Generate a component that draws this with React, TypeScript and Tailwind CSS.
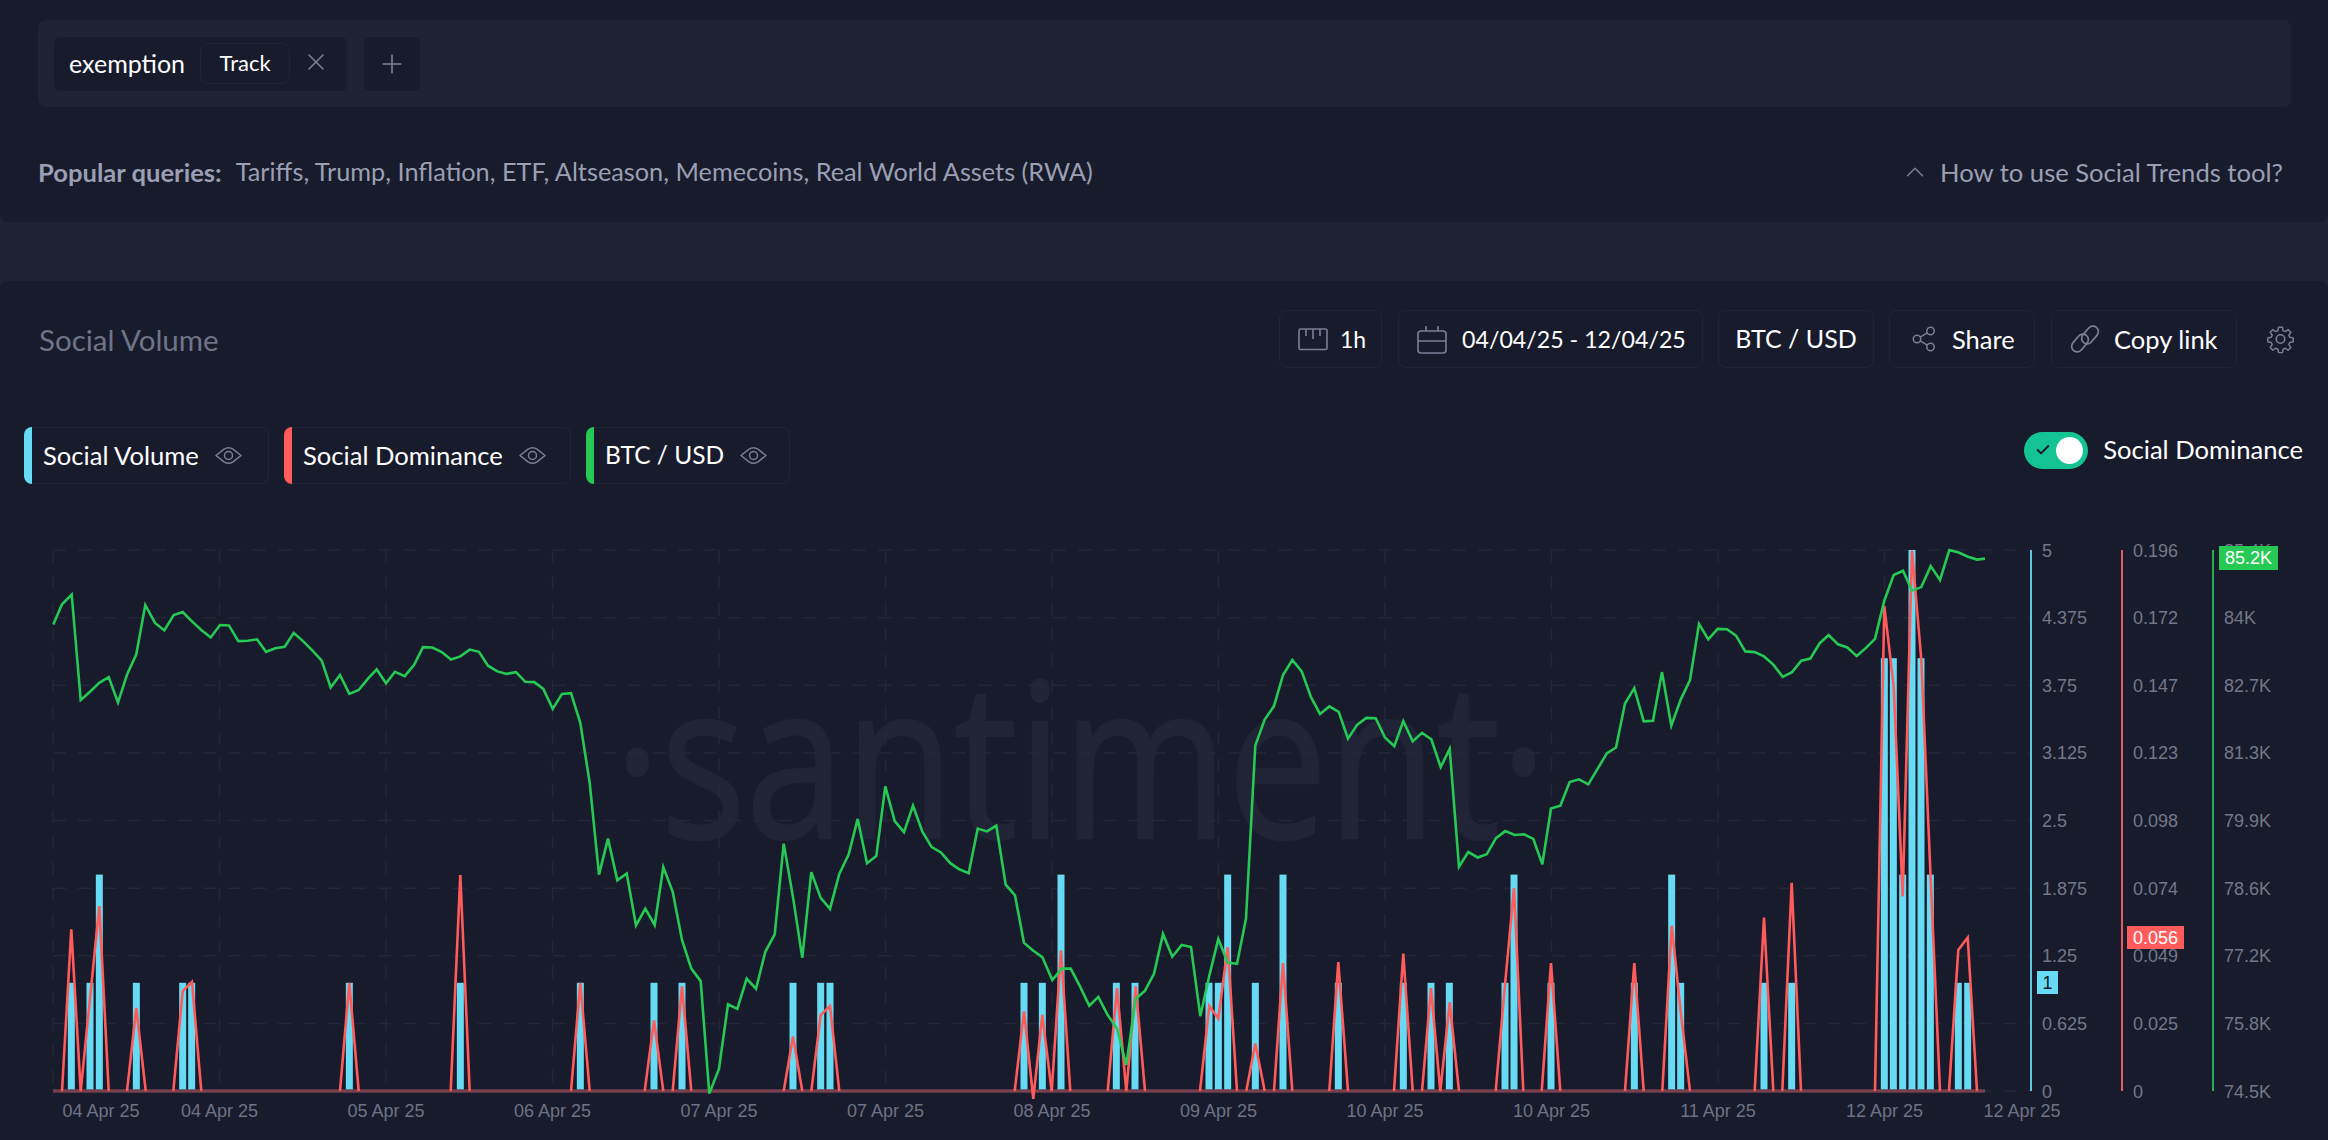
import React from "react";
import { X, Plus, ChevronUp, Check } from "lucide-react";

const c = (x0: number, s: string) =>
  s
    .trim()
    .split(/\s+/)
    .map((p) => {
      const [x, y] = p.split(",").map(Number);
      return `${(x0 + x / 3).toFixed(1)},${(540 + y / 2.8).toFixed(1)}`;
    })
    .join(" ");

const green = [
  c(40, "40,237 66,180 95,153 122,448 150,425 178,400 206,384 234,455 262,375 289,320 316,182 345,232 373,253 401,210 428,202 456,228 484,252 512,273 540,238 567,239 595,283 623,282 651,278 678,313 706,303 734,299 761,260 789,283 817,309 845,338 872,413 900,378 928,431 956,420 984,388 1010,362 1038,401 1065,369 1094,381 1122,350 1149,300 1177,301 1205,314 1233,335 1261,326 1289,307 1317,313 1344,352 1372,368 1400,375 1428,370 1456,397 1483,398 1510,417"),
  c(540, "38,473 66,431 93,429 121,512 149,680 177,937 204,836 232,953 260,934 288,1079 316,1032 344,1078 370,916 398,985 426,1120 454,1200 482,1235 508,1550 537,1480 564,1300 592,1313 620,1228 648,1257 676,1153 704,1104 731,850 759,1000 787,1170 814,930 842,1002 870,1033 898,935 926,880 953,781 981,905 1009,885 1036,690 1064,787 1092,818 1119,744 1147,816 1175,860 1203,875 1231,905 1258,922 1286,933 1313,808 1341,816 1369,800 1397,965 1425,995 1452,1128 1480,1150 1507,1168"),
  c(1040, "37,1232 65,1200 92,1200 120,1250 148,1304 175,1279 203,1330 231,1368 259,1470 287,1285 315,1262 342,1215 369,1103 397,1167 425,1134 453,1140 481,1333 508,1220 535,1117 563,1183 591,1187 618,1060 646,575 674,503 702,465 729,378 757,336 785,368 813,440 840,487 868,466 896,481 924,556 952,517 979,498 1007,499 1035,553 1063,577 1090,507 1118,564 1146,540 1174,558 1202,636 1229,585 1257,915 1285,874 1313,889 1340,880 1368,835 1396,815 1424,826 1452,824 1480,837"),
  c(1540, "7,908 33,752 61,744 89,678 117,670 145,684 173,640 201,597 228,581 255,458 283,415 311,508 339,506 366,370 394,520 422,447 450,392 477,235 505,278 533,249 561,250 588,268 616,312 644,314 672,326 700,349 728,383 756,370 784,338 811,332 839,289 866,266 894,292 922,301 950,325 978,302 1005,277 1033,170 1061,98 1089,86 1116,142 1144,132 1172,73 1200,112 1228,28 1256,35 1284,47 1311,55 1335,52"),
].join(" ");

const B = 1543;
const spikes: [number, string][] = [
  [40, `66,${B} 94,1090 122,${B} 178,1025 206,${B}`],
  [40, `261,${B} 289,1310 317,${B}`],
  [40, `400,${B} 428,1263 456,1237 484,${B}`],
  [40, `900,${B} 928,1240 956,${B}`],
  [40, `1232,${B} 1261,938 1289,${B}`],
  [540, `93,${B} 121,1240 149,${B}`],
  [540, `314,${B} 342,1345 370,${B}`],
  [540, `398,${B} 426,1250 454,${B}`],
  [540, `731,${B} 759,1390 787,${B}`],
  [540, `814,${B} 842,1330 870,1305 898,${B}`],
  [540, `1424,${B} 1452,1320 1480,1565 1507,1330 1535,${B}`],
  [1040, `35,${B} 63,1150 91,${B}`],
  [1040, `203,${B} 231,1255 259,${B} 287,1250 315,${B}`],
  [1040, `480,${B} 508,1305 535,1340 563,1140 591,${B}`],
  [1040, `619,${B} 646,1410 674,${B}`],
  [1040, `702,${B} 729,1185 757,${B}`],
  [1040, `868,${B} 895,1182 924,${B}`],
  [1040, `1062,${B} 1090,1158 1118,${B}`],
  [1040, `1146,${B} 1173,1255 1201,${B} 1229,1295 1257,${B}`],
  [1040, `1367,${B} 1395,1245 1422,975 1450,${B}`],
  [1540, `5,${B} 33,1185 61,${B}`],
  [1540, `255,${B} 283,1185 311,${B}`],
  [1540, `367,${B} 395,1080 422,1320 450,${B}`],
  [1540, `644,${B} 672,1057 700,${B}`],
  [1540, `727,${B} 755,960 783,${B}`],
  [1540, `1005,${B} 1033,185 1061,410 1088,998 1116,30 1144,335 1172,950 1200,${B}`],
  [1540, `1227,${B} 1255,1148 1283,1113 1311,${B}`],
];

const bars: [number, number, number][] = [
  [40, 94, 1], [40, 150, 1], [40, 178, 2], [40, 289, 1], [40, 428, 1], [40, 455, 1], [40, 928, 1], [40, 1261, 1],
  [540, 121, 1], [540, 342, 1], [540, 426, 1], [540, 759, 1], [540, 842, 1], [540, 870, 1], [540, 1452, 1], [540, 1507, 1],
  [1040, 63, 2], [1040, 229, 1], [1040, 285, 1], [1040, 507, 1], [1040, 535, 1], [1040, 563, 2], [1040, 646, 1], [1040, 729, 2], [1040, 895, 1], [1040, 1090, 1], [1040, 1173, 1], [1040, 1228, 1], [1040, 1395, 1], [1040, 1422, 2],
  [1540, 33, 1], [1540, 283, 1], [1540, 395, 2], [1540, 422, 1], [1540, 672, 1], [1540, 755, 1], [1540, 1033, 4], [1540, 1060, 4], [1540, 1088, 2], [1540, 1116, 5], [1540, 1143, 4], [1540, 1171, 2], [1540, 1255, 1], [1540, 1283, 1],
];

const TOP = 550;
const BOTTOM = 1091;
const rowY = (i: number) => TOP + (i * (BOTTOM - TOP)) / 8;
const gridX = [53, 219.5, 386, 552.5, 719, 885.5, 1052, 1218.5, 1385, 1551.5, 1718, 1884.5];
const dates: [number, string][] = [
  [101, "04 Apr 25"], [219.5, "04 Apr 25"], [386, "05 Apr 25"], [552.5, "06 Apr 25"], [719, "07 Apr 25"], [885.5, "07 Apr 25"], [1052, "08 Apr 25"], [1218.5, "09 Apr 25"], [1385, "10 Apr 25"], [1551.5, "10 Apr 25"], [1718, "11 Apr 25"], [1884.5, "12 Apr 25"], [2022, "12 Apr 25"],
];
const axes: { x: number; color: string; labels: string[] }[] = [
  { x: 2031, color: "#5fc7de", labels: ["5", "4.375", "3.75", "3.125", "2.5", "1.875", "1.25", "0.625", "0"] },
  { x: 2122, color: "#e35c60", labels: ["0.196", "0.172", "0.147", "0.123", "0.098", "0.074", "0.049", "0.025", "0"] },
  { x: 2213, color: "#27ad50", labels: ["85.4K", "84K", "82.7K", "81.3K", "79.9K", "78.6K", "77.2K", "75.8K", "74.5K"] },
];

function Chart() {
  return (
    <svg width={2328} height={600} viewBox="0 540 2328 600" className="block [font-family:Liberation_Sans,sans-serif]">
      <text x={614} y={838} fontSize={217} textLength={933} lengthAdjust="spacingAndGlyphs" fill="#202436" stroke="#202436" strokeWidth={2.5} className="[font-family:Open_Sans,sans-serif]">
        ·santiment·
      </text>
      {Array.from({ length: 9 }, (_, i) => (
        <line key={i} x1={53} x2={2031} y1={rowY(i)} y2={rowY(i)} stroke="#24273a" strokeWidth={1.5} strokeDasharray="13 12" />
      ))}
      {gridX.map((x) => (
        <line key={x} x1={x} x2={x} y1={TOP} y2={BOTTOM} stroke="#24273a" strokeWidth={1.5} strokeDasharray="13 13" />
      ))}
      {bars.map(([x0, x, v], i) => {
        const h = v * 108.2;
        return <rect key={i} x={x0 + x / 3 - 3.5} y={BOTTOM - h} width={7} height={h} fill="#68dbf4" />;
      })}
      <line x1={53} x2={1985} y1={BOTTOM} y2={BOTTOM} stroke="#74404f" strokeWidth={3.5} />
      {spikes.map(([x0, s], i) => (
        <polyline key={i} points={c(x0, s)} fill="none" stroke="#ff5b5b" strokeWidth={2.6} />
      ))}
      <polyline points={green} fill="none" stroke="#26c953" strokeWidth={2.6} />
      {axes.map((a) => (
        <g key={a.x}>
          <line x1={a.x} x2={a.x} y1={TOP} y2={BOTTOM} stroke={a.color} strokeWidth={2} />
          {a.labels.map((l, i) => (
            <text key={i} x={a.x + 11} y={rowY(i) + 6.5} fontSize={18} fill="#737789">
              {l}
            </text>
          ))}
        </g>
      ))}
      {dates.map(([x, d], i) => (
        <text key={i} x={x} y={1117} fontSize={18} fill="#6e7285" textAnchor="middle">
          {d}
        </text>
      ))}
      <rect x={2037} y={971} width={21} height={23} fill="#68dbf4" />
      <text x={2047.5} y={989} fontSize={18} fill="#181b2b" textAnchor="middle">1</text>
      <rect x={2127} y={926} width={57} height={23} fill="#ff5b5b" />
      <text x={2133} y={944} fontSize={18} fill="#ffffff">0.056</text>
      <rect x={2219} y={546} width={59} height={24} fill="#26c953" />
      <text x={2225} y={564} fontSize={18} fill="#ffffff">85.2K</text>
    </svg>
  );
}

const RulerIcon = () => (
  <svg width="30" height="23" viewBox="0 0 30 23" fill="none" stroke="#7a7f96" strokeWidth="1.6">
    <rect x="1" y="1" width="28" height="20.5" rx="1.5" />
    <path d="M8 1v7M15 1v10M22 1v7" />
  </svg>
);
const CalendarIcon = () => (
  <svg width="30" height="29" viewBox="0 0 30 29" fill="none" stroke="#7a7f96" strokeWidth="1.6">
    <rect x="1" y="6" width="28" height="22" rx="3" />
    <path d="M1 16h28M9 1v5M21 1v5" />
  </svg>
);
const ShareIcon = () => (
  <svg width="24" height="26" viewBox="0 0 24 26" fill="none" stroke="#7a7f96" strokeWidth="1.5">
    <circle cx="5" cy="13" r="3.7" />
    <circle cx="18.5" cy="5" r="3.7" />
    <circle cx="18.5" cy="21" r="3.7" />
    <path d="M8.2 11.1 15.3 6.9M8.2 14.9l7.1 4.2" />
  </svg>
);
const LinkIcon = () => (
  <svg width="30" height="30" viewBox="0 0 30 30" fill="none" stroke="#7a7f96" strokeWidth="1.7">
    <rect x="14.5" y="1" width="11" height="20" rx="5.5" transform="rotate(40 20 11)" />
    <rect x="4.5" y="9" width="11" height="20" rx="5.5" transform="rotate(40 10 19)" />
  </svg>
);
const GearIcon = () => (
  <svg width="31" height="30" viewBox="0 0 24 24" fill="none" stroke="#7a7f96" strokeWidth="1.3" strokeLinejoin="round">
    <circle cx="12" cy="12" r="3.4" />
    <path d="M10.3 1.5h3.4l.6 3.1 1.9.8 2.6-1.8 2.4 2.4-1.8 2.6.8 1.9 3.1.6v3.4l-3.1.6-.8 1.9 1.8 2.6-2.4 2.4-2.6-1.8-1.9.8-.6 3.1h-3.4l-.6-3.1-1.9-.8-2.6 1.8-2.4-2.4 1.8-2.6-.8-1.9-3.1-.6v-3.4l3.1-.6.8-1.9-1.8-2.6 2.4-2.4 2.6 1.8 1.9-.8z" transform="translate(1.2 1.2) scale(.9)" />
  </svg>
);
const EyeIcon = () => (
  <svg width="27" height="19" viewBox="0 0 27 19" fill="none" stroke="#7a7f96" strokeWidth="1.5" strokeLinejoin="round">
    <path d="M1 9.5 9 3.2Q13.5.2 18 3.2L26 9.5 18 15.8Q13.5 18.8 9 15.8Z" />
    <circle cx="13.5" cy="9.5" r="4" />
  </svg>
);

function ToolButton({ children, className }: { children: React.ReactNode; className: string }) {
  return (
    <div className={`flex h-[58px] items-center whitespace-nowrap rounded-lg border border-[#212436] text-white ${className}`}>
      {children}
    </div>
  );
}

function Legend({ color, label, w, size }: { color: string; label: string; w: string; size: string }) {
  return (
    <div className={`flex h-[57px] ${w}`}>
      <div className={`h-full w-2 rounded-l-lg ${color}`} />
      <div className={`flex flex-1 items-center gap-4 rounded-r-lg border-y border-r border-[#212436] pl-[11px] text-white ${size}`}>
        <span>{label}</span>
        <EyeIcon />
      </div>
    </div>
  );
}

export default function App() {
  return (
    <div className="flex h-[1140px] w-[2328px] flex-col overflow-hidden bg-[#1f2233] [font-family:Lato,sans-serif]">
      <section className="h-[222px] rounded-b-lg bg-[#181b2b] pl-[38px] pr-[37px] pt-5">
        <div className="flex h-[87px] items-center gap-[17px] rounded-lg bg-[#1f2233] pl-4">
          <div className="flex h-[54px] w-[293px] items-center rounded-md bg-[#181b2b] pl-[15px]">
            <span className="text-[25px] text-white">exemption</span>
            <div className="ml-[15px] flex h-[41px] w-[90px] items-center justify-center rounded-lg border border-[#212436] pb-0.5 text-[22px] text-white">
              Track
            </div>
            <X size={28} strokeWidth={1.4} className="ml-3 -translate-y-0.5 text-[#7a7f96]" />
          </div>
          <div className="flex h-[54px] w-14 items-center justify-center rounded-md bg-[#181b2b]">
            <Plus size={30} strokeWidth={1.3} className="text-[#7a7f96]" />
          </div>
        </div>
        <div className="mt-[46px] flex items-center justify-between pr-2 text-[25.6px] text-[#9a9fb3]">
          <div className="flex items-center">
            <span className="font-bold">Popular queries:</span>
            <span className="ml-[14px] text-[25.3px]">Tariffs, Trump, Inflation, ETF, Altseason, Memecoins, Real World Assets (RWA)</span>
          </div>
          <div className="flex items-center gap-[10px]">
            <ChevronUp size={30} strokeWidth={1.2} className="text-[#7a7f96]" />
            <span>How to use Social Trends tool?</span>
          </div>
        </div>
      </section>
      <div className="h-[59px] shrink-0" />
      <section className="flex-1 rounded-t-lg bg-[#181b2b]">
        <div className="flex items-center justify-between pl-[39px] pr-8 pt-[29px]">
          <h2 className="pt-0.5 text-[29.5px] font-normal text-[#6f7489]">Social Volume</h2>
          <div className="flex items-center">
            <ToolButton className="w-[103px] gap-3 pl-[18px] text-[23px]"><RulerIcon /><span>1h</span></ToolButton>
            <ToolButton className="ml-4 w-[305px] gap-[15px] pl-[18px] text-[23.2px]"><CalendarIcon /><span>04/04/25 - 12/04/25</span></ToolButton>
            <ToolButton className="ml-[15px] w-[156px] justify-center text-[25px]"><span>BTC / USD</span></ToolButton>
            <ToolButton className="ml-[15px] w-[146px] gap-4 pl-[22px] text-[25.5px]"><ShareIcon /><span>Share</span></ToolButton>
            <ToolButton className="ml-4 w-[186px] gap-[14px] pl-[18px] text-[25.5px]"><LinkIcon /><span>Copy link</span></ToolButton>
            <div className="ml-7"><GearIcon /></div>
          </div>
        </div>
        <div className="mt-[59px] flex items-start justify-between pl-6 pr-[25px]">
          <div className="flex gap-[15px]">
            <Legend color="bg-[#68dbf4]" label="Social Volume" w="w-[245px]" size="text-[25.6px]" />
            <Legend color="bg-[#ff5b5b]" label="Social Dominance" w="w-[287px]" size="text-[25.6px]" />
            <Legend color="bg-[#26c953]" label="BTC / USD" w="w-[204px]" size="text-[24.5px]" />
          </div>
          <div className="mt-[3px] flex items-center gap-[15px]">
            <div className="flex h-[37px] w-16 items-center justify-between rounded-full bg-[#14c393] pl-[11px] pr-[5px]">
              <Check size={16} strokeWidth={3} className="text-[#181b2b]" />
              <div className="size-[27px] rounded-full bg-white" />
            </div>
            <span className="pb-0.5 text-[25.6px] text-white">Social Dominance</span>
          </div>
        </div>
        <div className="mt-[56px]">
          <Chart />
        </div>
      </section>
    </div>
  );
}
